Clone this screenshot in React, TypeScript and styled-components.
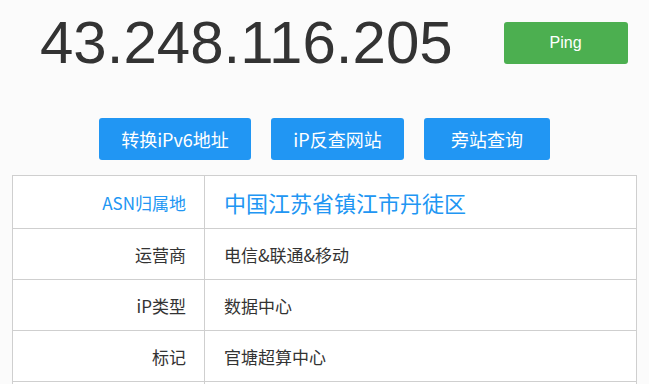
import React from 'react';
import styled, { createGlobalStyle } from 'styled-components';

const GlobalStyle = createGlobalStyle`
  html, body {
    margin: 0;
    padding: 0;
    background: #fbfbfb;
    font-family: "Noto Sans CJK SC", "Liberation Sans", sans-serif;
    color: #333;
  }
`;

const Page = styled.div`
  padding: 0 12px;
  height: 384px;
  overflow: hidden;
`;

const Header = styled.div`
  display: flex;
  align-items: center;
  padding: 13px 0 0 28px;
  gap: 51px;
`;

const IpText = styled.h1`
  margin: 0;
  font-family: "Liberation Sans", Arial, sans-serif;
  font-weight: 400;
  font-size: 60px;
  line-height: 60px;
  color: #333;
`;

const Button = styled.button<{ $color: string; $width: number }>`
  width: ${(p) => p.$width}px;
  height: 42px;
  padding: 0;
  border: none;
  border-radius: 3px;
  background: ${(p) => p.$color};
  color: #fff;
  font-family: "Noto Sans CJK SC", sans-serif;
  font-size: 18px;
  line-height: 42px;
  white-space: nowrap;
  cursor: pointer;
`;

const PingButton = styled(Button)`
  font-family: "Liberation Sans", "Noto Sans CJK SC", sans-serif;
  font-size: 16px;
`;

const Actions = styled.div`
  display: flex;
  justify-content: center;
  gap: 20px;
  margin-top: 45px;
`;

const Table = styled.div`
  margin-top: 15px;
  background: #fff;
  border: 1px solid #cfcfcf;
  border-bottom: none;
`;

const Row = styled.div<{ $tall?: boolean }>`
  display: grid;
  grid-template-columns: 192px 1fr;
  min-height: ${(p) => (p.$tall ? '52px' : '50px')};
  border-bottom: 1px solid #cfcfcf;
`;

const Label = styled.div<{ $accent?: boolean }>`
  display: flex;
  align-items: center;
  justify-content: flex-end;
  padding-right: 18px;
  border-right: 1px solid #cfcfcf;
  font-size: 17px;
  color: ${(p) => (p.$accent ? '#2196f3' : '#333')};
`;

const Value = styled.div<{ $accent?: boolean }>`
  display: flex;
  align-items: center;
  padding-left: 19px;
  font-size: ${(p) => (p.$accent ? '22px' : '17px')};
  color: ${(p) => (p.$accent ? '#2196f3' : '#333')};
`;

const rows = [
  { label: '运营商', value: '电信&联通&移动' },
  { label: 'iP类型', value: '数据中心' },
  { label: '标记', value: '官塘超算中心' },
  { label: '', value: '' },
];

export default function App() {
  return (
    <Page>
      <GlobalStyle />
      <Header>
        <IpText>43.248.116.205</IpText>
        <PingButton $color="#4caf50" $width={124}>Ping</PingButton>
      </Header>
      <Actions>
        <Button $color="#2196f3" $width={152}>转换iPv6地址</Button>
        <Button $color="#2196f3" $width={133}>iP反查网站</Button>
        <Button $color="#2196f3" $width={126}>旁站查询</Button>
      </Actions>
      <Table>
        <Row $tall>
          <Label $accent>ASN归属地</Label>
          <Value $accent>中国江苏省镇江市丹徒区</Value>
        </Row>
        {rows.map((r, i) => (
          <Row key={i}>
            <Label>{r.label}</Label>
            <Value>{r.value}</Value>
          </Row>
        ))}
      </Table>
    </Page>
  );
}
